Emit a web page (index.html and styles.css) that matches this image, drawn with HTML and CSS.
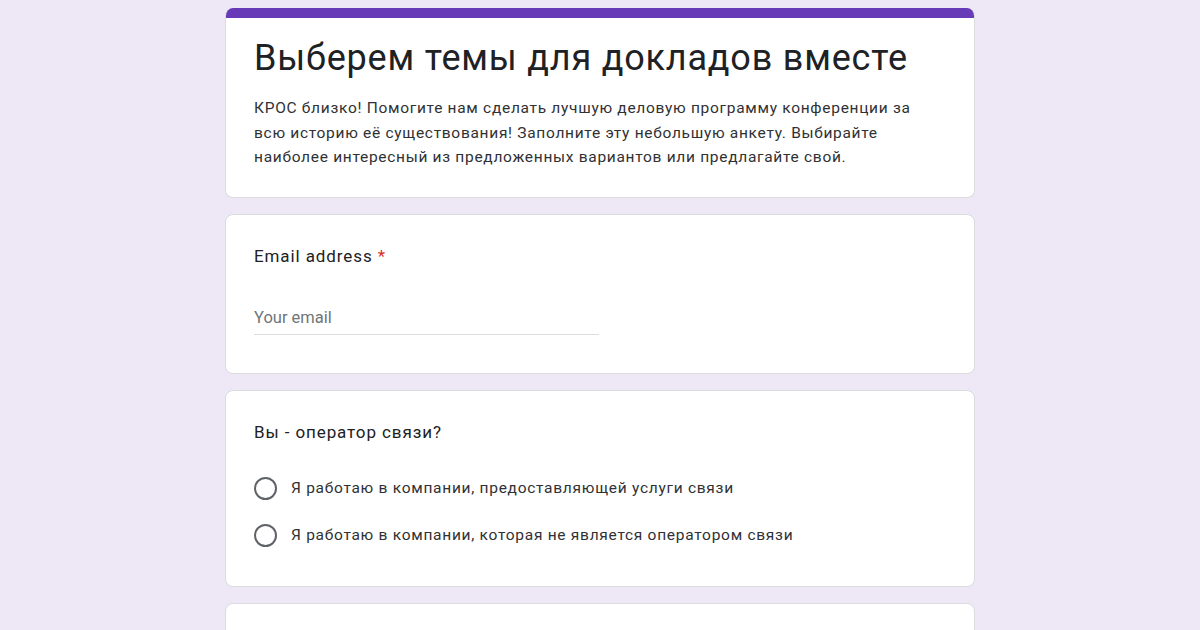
FILE: index.html
```
<!DOCTYPE html>
<html lang="ru">
<head>
  <meta charset="UTF-8" />
  <meta name="viewport" content="width=device-width, initial-scale=1.0"/>
  <title>Выберем темы для докладов вместе</title>
  <link rel="stylesheet" href="styles.css">
</head>
<body>
<div class="form">
  <div class="card head-card">
    <div class="accent"></div>
    <div class="head-body">
      <div class="title">Выберем темы для докладов вместе</div>
      <div class="desc">КРОС близко! Помогите нам сделать лучшую деловую программу конференции за всю историю её существования! Заполните эту небольшую анкету. Выбирайте наиболее интересный из предложенных вариантов или предлагайте свой.</div>
    </div>
  </div>

  <div class="card question">
    <div class="q-title">Email address <span class="req">*</span></div>
    <div class="text-input">Your email</div>
  </div>

  <div class="card question">
    <div class="q-title">Вы - оператор связи?</div>
    <div class="options">
      <label class="option"><span class="radio"></span>Я работаю в компании, предоставляющей услуги связи</label>
      <label class="option"><span class="radio"></span>Я работаю в компании, которая не является оператором связи</label>
    </div>
  </div>

  <div class="card question last"></div>
</div>
</body>
</html>
```

FILE: styles.css
```
body {
  margin: 0;
  background-color: #ede7f6;
  font-family: Roboto, 'Liberation Sans', sans-serif;
  color: #202124;
  overflow: hidden;
}
.form {
  width: 750px;
  margin: 8px auto 0;
  display: flex;
  flex-direction: column;
  gap: 16px;
}
.card {
  background-color: #fff;
  border: 1px solid #dadce0;
  border-radius: 8px;
}
.head-card {
  overflow: hidden;
  border-top: none;
}
.accent {
  height: 10px;
  background-color: #673ab7;
}
.head-body {
  padding: 16px 28px 27px;
}
.title {
  font-size: 36px;
  line-height: 48px;
  letter-spacing: 0.8px;
}
.desc {
  max-width: 670px;
  margin-top: 14px;
  font-size: 15.5px;
  line-height: 24.5px;
  letter-spacing: 0.7px;
  color: #303134;
}
.question {
  padding: 29px 28px 38px;
}
.q-title {
  font-size: 17px;
  line-height: 24px;
  letter-spacing: 0.9px;
}
.req {
  color: #d93025;
}
.text-input {
  margin-top: 38px;
  width: 345px;
  padding-bottom: 4px;
  border-bottom: 1px solid #dadce0;
  font-size: 16.5px;
  line-height: 24px;
  color: #70757a;
}
.options {
  margin-top: 21px;
  margin-bottom: -11px;
}
.option {
  display: flex;
  align-items: center;
  height: 47px;
  font-size: 15.5px;
  letter-spacing: 0.72px;
  color: #303134;
}
.radio {
  width: 19px;
  height: 19px;
  border: 2px solid #5f6368;
  border-radius: 50%;
  margin-right: 14px;
}
.last {
  height: 80px;
}
```
